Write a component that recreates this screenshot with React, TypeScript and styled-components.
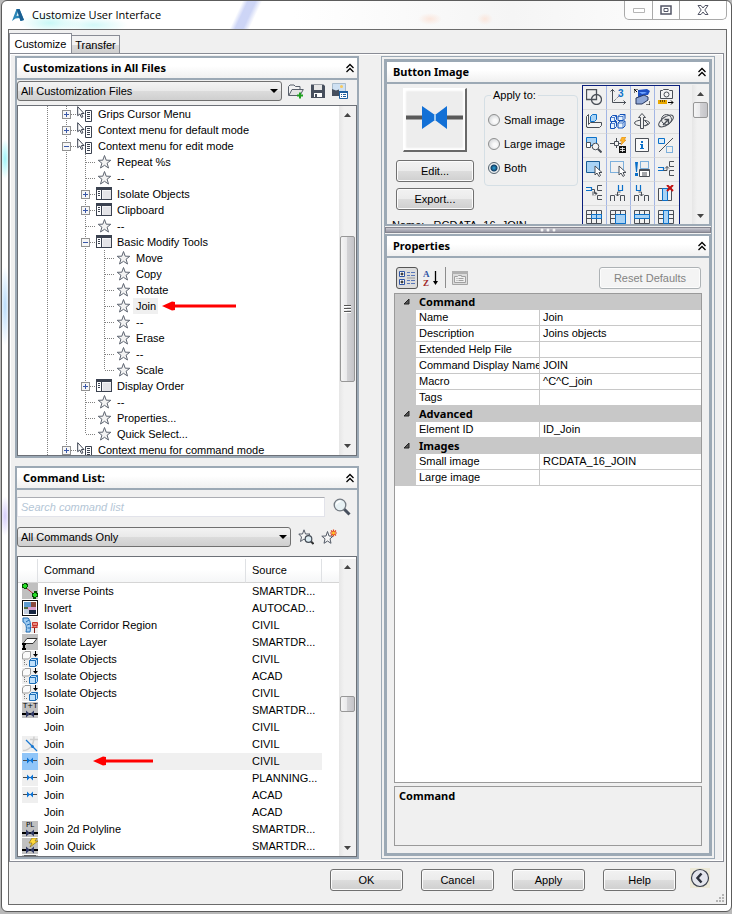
import React from 'react';
import styled, { createGlobalStyle, css } from 'styled-components';

const GlobalStyle = createGlobalStyle`
  * { box-sizing: border-box; }
  html, body { margin: 0; padding: 0; }
  body {
    background: #b9b9b9;
    color: #000;
    font: 11px/16px "Liberation Sans", Arial, sans-serif;
    overflow: hidden;
  }
  button, input, select { font: inherit; color: inherit; margin: 0; }
`;

const headingFont = css`
  font: bold 11px/16px "Noto Sans", "Open Sans", sans-serif;
`;

const edge = '#9ca9b5';

/* ---------- window ---------- */

const Desktop = styled.div`
  height: 100vh;
  min-height: 640px;
  padding: 0 0 2px 1px;
  display: flex;
`;

const Dialog = styled.main`
  flex: 1;
  min-width: 0;
  display: flex;
  flex-direction: column;
  border: 1px solid #5c5c5c;
  border-radius: 6px;
  padding: 0 4px 6px 6px;
  background:
    linear-gradient(115deg, transparent 218px, #b4c0f1aa 223px, #b4c0f1aa 230px, transparent 236px) 0 0 / 560px 28px no-repeat,
    radial-gradient(ellipse 30px 10px at 48px 22px, #c9f8f6, transparent) no-repeat,
    radial-gradient(ellipse 34px 8px at 92px 24px, #d3f8f8, transparent) no-repeat,
    radial-gradient(ellipse 12px 6px at 428px 18px, #fbe6dc, transparent) no-repeat,
    radial-gradient(ellipse 8px 6px at 483px 18px, #fbe6dc, transparent) no-repeat,
    radial-gradient(ellipse 5px 20px at 3px 158px, #9ff4f8, transparent) no-repeat,
    radial-gradient(ellipse 5px 40px at 3px 305px, #b9dcfb, transparent) no-repeat,
    radial-gradient(ellipse 5px 20px at 3px 515px, #d5cdfb, transparent) no-repeat,
    linear-gradient(90deg, #fff 40%, #f5f5f5 70%, #fff);
`;

const TitleBar = styled.header`
  height: 28px;
  flex: none;
  display: flex;
  align-items: flex-start;
  gap: 6px;
  padding-left: 2px;
`;

const TitleIcon = styled.span`
  display: flex;
  padding-top: 6px;
`;

const Title = styled.h1`
  flex: 1;
  margin: 0;
  padding-top: 5px;
  font: 11px/18px "Open Sans", "Noto Sans", sans-serif;
`;

const Captions = styled.div`
  display: flex;
  height: 19px;
  border: 1px solid #a9a9a9;
  border-top: 0;
  border-radius: 0 0 5px 5px;
  background: #ffffff99;
`;

const Caption = styled.button<{ $wide?: boolean }>`
  width: ${p => (p.$wide ? 47 : 27)}px;
  padding: 0;
  border: 0;
  background: none;
  display: flex;
  align-items: center;
  justify-content: center;
  & + & { border-left: 1px solid #a9a9a9; }
`;

const Client = styled.div`
  flex: 1;
  min-height: 0;
  display: flex;
  flex-direction: column;
  border: 1px solid #6b6b6b;
  background: #f0f0f0;
`;

const TabStrip = styled.div`
  display: flex;
  align-items: flex-end;
  height: 23px;
  flex: none;
`;

const Tab = styled.button<{ $active?: boolean }>`
  height: ${p => (p.$active ? 20 : 18)}px;
  width: ${p => (p.$active ? 63 : 48)}px;
  padding: 0;
  text-align: center;
  border: 1px solid #898c95;
  border-bottom: 0;
  background: ${p => (p.$active ? '#fff' : 'linear-gradient(#f2f2f2 50%, #dadada 50%, #cfcfcf)')};
  & + & { border-left: 0; }
`;

const TabPage = styled.section`
  flex: 1;
  min-height: 0;
  display: grid;
  grid-template-columns: 344fr 334fr;
  column-gap: 22px;
  margin-right: 2px;
  padding: 2px 8px 2px 5px;
  border: 1px solid #898c95;
  box-shadow: inset 0 0 0 1px #fff;
`;

const LeftColumn = styled.div`
  min-width: 0;
  min-height: 0;
  display: grid;
  grid-template-rows: 401fr 393fr;
  row-gap: 8px;
`;

const RightColumn = styled.div`
  min-width: 0;
  min-height: 0;
  display: flex;
  flex-direction: column;
  border: 4px double ${edge};
`;

/* ---------- panels ---------- */

const Panel = styled.section<{ $grow?: boolean }>`
  min-height: 0;
  min-width: 0;
  display: flex;
  flex-direction: column;
  border: 2px solid ${edge};
  ${p => p.$grow && css`flex: 1;`}
`;

const PanelHeader = styled.div`
  height: 22px;
  flex: none;
  display: flex;
  align-items: center;
  padding: 0 2px 0 6px;
  background: linear-gradient(#fff 40%, #f0f0f0);
  border-bottom: 2px solid ${edge};
`;

const PanelTitle = styled.h2`
  ${headingFont}
  flex: 1;
  margin: 0;
`;

const IconButton = styled.button`
  display: flex;
  flex: none;
  padding: 0;
  border: 0;
  background: none;
`;

const ToolRow = styled.div<{ $kind: 'files' | 'search' | 'filter' }>`
  flex: none;
  display: flex;
  align-items: center;
  ${p => p.$kind === 'files' && css`height: 25px; gap: 6px; padding: 0 8px 4px 0;`}
  ${p => p.$kind === 'search' && css`height: 33px; gap: 8px; padding: 2px 6px 0 0;`}
  ${p => p.$kind === 'filter' && css`height: 33px; gap: 7px; padding: 0 20px 4px 0;`}
`;

const SelectWrap = styled.label`
  flex: 1;
  min-width: 0;
  display: grid;
  align-items: center;
  & > * { grid-area: 1 / 1; }
  & > svg { justify-self: end; margin-right: 4px; pointer-events: none; }
`;

const Select = styled.select`
  appearance: none;
  width: 100%;
  height: 20px;
  padding: 0 20px 0 3px;
  border: 1px solid #707070;
  border-radius: 3px;
  background: linear-gradient(#f3f3f3, #e9e9e9 50%, #dcdcdc 50%, #cfcfcf);
`;

const SearchInput = styled.input`
  flex: 1;
  min-width: 0;
  height: 20px;
  padding: 0 3px;
  border: 1px solid #e2e3ea;
  border-top-color: #abadb3;
  background: #fff;
  font-style: italic;
  &::placeholder { color: #b4c6d6; opacity: 1; }
`;

/* ---------- scroll bars ---------- */

const ScrollTrack = styled.div`
  width: 17px;
  flex: none;
  display: flex;
  flex-direction: column;
  background: linear-gradient(90deg, #e6e6e6, #f1f1f1 30%, #f1f1f1);
`;

const ScrollArrow = styled.button`
  height: 17px;
  flex: none;
  padding: 0;
  border: 0;
  background: none;
  display: flex;
  align-items: center;
  justify-content: center;
`;

const ScrollGap = styled.div<{ $grow: number }>`
  flex: ${p => p.$grow} 1 0;
`;

const ScrollThumb = styled.div<{ $grow?: number }>`
  flex: ${p => (p.$grow ? `${p.$grow} 1 0` : '0 0 16px')};
  margin: 0 1px;
  border: 1px solid #979797;
  border-radius: 2px;
  background: linear-gradient(90deg, #f5f5f5, #e9e9eb 45%, #d2d2d5 50%, #c4c4c8);
  display: flex;
  align-items: center;
  justify-content: center;
`;

function ScrollBar({ before, thumb, after }: { before: number; thumb?: number; after: number }) {
  return (
    <ScrollTrack>
      <ScrollArrow aria-label="Scroll up">
        <svg width="7" height="4"><path d="M3.5 0L7 4H0z" fill="#444" /></svg>
      </ScrollArrow>
      <ScrollGap $grow={before} />
      <ScrollThumb $grow={thumb}>
        {thumb && (
          <svg width="7" height="8" shapeRendering="crispEdges">
            <path d="M0 .5h7M0 3.5h7M0 6.5h7" stroke="#555" />
            <path d="M0 1.5h7M0 4.5h7M0 7.5h7" stroke="#fff" />
          </svg>
        )}
      </ScrollThumb>
      <ScrollGap $grow={after} />
      <ScrollArrow aria-label="Scroll down">
        <svg width="7" height="4"><path d="M0 0h7L3.500 4z" fill="#444" /></svg>
      </ScrollArrow>
    </ScrollTrack>
  );
}

/* ---------- small drawings ---------- */

const Svg = ({ children, w = 16, h = 16, crisp }: { children: React.ReactNode; w?: number; h?: number; crisp?: boolean }) => (
  <svg width={w} height={h} viewBox={`0 0 ${w} ${h}`} fill="none" shapeRendering={crisp ? 'crispEdges' : undefined}>
    {children}
  </svg>
);

const CollapseIcon = () => (
  <Svg w={10} h={10}>
    <path d="M1.500 5L5 1.500L8.500 5M1.500 9L5 5.500L8.500 9" stroke="#000" strokeWidth="1.300" />
  </Svg>
);

const DropArrow = () => <Svg w={8} h={4}><path d="M0 0h8L4 4z" fill="#000" /></Svg>;

const starPath = 'M8.500 1.500L10.200 6.200L14.800 6.300L11.100 9.200L12.500 14L8.500 11.300L4.500 14L5.900 9.200L2.200 6.300L6.800 6.200z';

const StarIcon = () => (
  <Svg><path d={starPath} fill="#f3f3f3" stroke="#5f6672" /></Svg>
);

const MenuIcon = () => (
  <Svg crisp>
    <path d="M.5 1.500h15v12H.5z" fill="#f4f4f6" stroke="#3b4250" />
    <path d="M1 1h14v3H1zM5 4h1v10H5z" fill="#3b4250" />
    <path d="M1 4h4v9H1z" fill="#fff" />
    <path d="M2 5.500h2M2 7.500h2M2 9.500h2" stroke="#3b4250" />
    <path d="M7 5h8v8H7z" fill="#e4e4e8" />
  </Svg>
);

const ContextIcon = () => (
  <Svg>
    <path d="M.7 .7V9.700L2.800 8L4.500 11.500L5.900 10.800L4.400 7.500H7z" fill="#fff" stroke="#3b4250" />
    <path d="M8.500 4.500h6v11h-6z" fill="#fff" stroke="#3b4250" />
    <path d="M10 6.500h3M10 8.500h3M10 10.500h3M10 12.500h3" stroke="#3b4250" />
  </Svg>
);

type Cell = 'v' | 'tee' | 'last' | 'plus' | 'minus';

const GuideCell = ({ kind }: { kind: Cell }) => {
  const box = kind === 'plus' || kind === 'minus';
  return (
    <Svg w={19} crisp>
      <path d={kind === 'last' ? 'M9.500 0V8' : 'M9.500 0V16'} stroke="#808080" strokeDasharray="1 1" />
      {kind !== 'v' && <path d="M10 8.500H19" stroke="#808080" strokeDasharray="1 1" />}
      {box && (
        <>
          <path d="M5.500 4.500h8v8h-8z" fill="#f6f6f6" stroke="#919191" />
          <path d={kind === 'plus' ? 'M7 8.500h5M9.500 6v5' : 'M7 8.500h5'} stroke="#3a58a8" />
        </>
      )}
    </Svg>
  );
};

const RedArrow = ({ length }: { length: number }) => (
  <Svg w={length} h={10}>
    <path d="M0 5L10 .5L13 1V9L10 9.500z" fill="#f00" />
    <path d={`M12 5H${length}`} stroke="#f00" strokeWidth="3" />
  </Svg>
);

/* ---------- customization tree ---------- */

const Well = styled.div`
  flex: 1;
  min-height: 0;
  display: flex;
  overflow: hidden;
  border: 1px solid #6d7178;
  background: #fff;
`;

const TreeList = styled.ul`
  flex: 1;
  min-width: 0;
  margin: 0;
  padding: 0 0 0 20px;
  list-style: none;
  overflow: hidden;
`;

const TreeRow = styled.li`
  height: 16px;
  display: flex;
  align-items: center;
  white-space: nowrap;
  & > svg { flex: none; }
`;

const TreeIcon = styled.span`
  display: flex;
  flex: none;
  margin-left: 1px;
`;

const TreeLabel = styled.span<{ $selected?: boolean }>`
  height: 16px;
  line-height: 16px;
  margin: 0 4px 0 2px;
  padding: 0 2px 0 3px;
  background: ${p => (p.$selected ? '#f0f0f0' : 'none')};
`;

type TreeNode = { label: string; cells: Cell[]; icon: 'star' | 'menu' | 'context'; selected?: boolean };

const tree: TreeNode[] = [
  { label: 'Grips Cursor Menu', cells: ['v', 'plus'], icon: 'context' },
  { label: 'Context menu for default mode', cells: ['v', 'plus'], icon: 'context' },
  { label: 'Context menu for edit mode', cells: ['v', 'minus'], icon: 'context' },
  { label: 'Repeat %s', cells: ['v', 'v', 'tee'], icon: 'star' },
  { label: '--', cells: ['v', 'v', 'tee'], icon: 'star' },
  { label: 'Isolate Objects', cells: ['v', 'v', 'plus'], icon: 'menu' },
  { label: 'Clipboard', cells: ['v', 'v', 'plus'], icon: 'menu' },
  { label: '--', cells: ['v', 'v', 'tee'], icon: 'star' },
  { label: 'Basic Modify Tools', cells: ['v', 'v', 'minus'], icon: 'menu' },
  { label: 'Move', cells: ['v', 'v', 'v', 'tee'], icon: 'star' },
  { label: 'Copy', cells: ['v', 'v', 'v', 'tee'], icon: 'star' },
  { label: 'Rotate', cells: ['v', 'v', 'v', 'tee'], icon: 'star' },
  { label: 'Join', cells: ['v', 'v', 'v', 'tee'], icon: 'star', selected: true },
  { label: '--', cells: ['v', 'v', 'v', 'tee'], icon: 'star' },
  { label: 'Erase', cells: ['v', 'v', 'v', 'tee'], icon: 'star' },
  { label: '--', cells: ['v', 'v', 'v', 'tee'], icon: 'star' },
  { label: 'Scale', cells: ['v', 'v', 'v', 'last'], icon: 'star' },
  { label: 'Display Order', cells: ['v', 'v', 'plus'], icon: 'menu' },
  { label: '--', cells: ['v', 'v', 'tee'], icon: 'star' },
  { label: 'Properties...', cells: ['v', 'v', 'tee'], icon: 'star' },
  { label: 'Quick Select...', cells: ['v', 'v', 'last'], icon: 'star' },
  { label: 'Context menu for command mode', cells: ['v', 'plus'], icon: 'context' },
];

const treeIcons = { star: StarIcon, menu: MenuIcon, context: ContextIcon };

const OpenIcon = () => (
  <Svg>
    <path d="M.5 12.500V3.500L2 2h4l1.500 1.500H12V6" stroke="#59606b" fill="#f3f3f3" />
    <path d="M.8 12.500L4 6.500H15.300L12 12.500z" stroke="#59606b" fill="#e4e4e4" />
    <path d="M9 12.500h6M12 9.500v6" stroke="#20a020" strokeWidth="2" />
  </Svg>
);

const SaveIcon = () => (
  <Svg>
    <path d="M1 1.500h12.500L15 3v12H1z" fill="#474f5d" />
    <path d="M4 2h8v5H4z" fill="#e6e6e6" />
    <path d="M4 10h8v4H4z" fill="#fff" />
    <path d="M5 11h2v3H5z" fill="#474f5d" />
  </Svg>
);

const WorkspaceIcon = () => (
  <Svg w={17}>
    <path d="M.5 .5h13v12H.5z" fill="#cfe1f3" stroke="#a9bccd" />
    <path d="M0 6l4 1.500 3-1v6.500H0z" fill="#474f5d" />
    <circle cx="9.500" cy="3.500" r="1.500" fill="#f7c95c" />
    <path d="M7.500 8.500h8v7h-8z" fill="#fff" stroke="#1e5f9e" />
    <path d="M7 8h9v2H7z" fill="#1e5f9e" />
    <path d="M9 11.500h1m1 0h3M9 13.500h1m1 0h3" stroke="#1e5f9e" />
  </Svg>
);

/* ---------- command list ---------- */

const SearchIcon = () => (
  <Svg w={18} h={18}>
    <path d="M11 11l5.500 5.500" stroke="#474f5d" strokeWidth="3" />
    <circle cx="7" cy="7" r="5.800" fill="#e7f1f4" stroke="#737a82" strokeWidth="1.300" />
    <path d="M3.500 6.500a3.500 3.500 0 0 1 4-3" stroke="#fff" strokeWidth="1.500" />
  </Svg>
);

const FindStarIcon = () => (
  <Svg>
    <path d="M6 .8L7.500 5H12L8.500 8L9.500 12.500L6 10L2.500 12.500L3.500 8L.8 5H4.500z" fill="#f5f5f5" stroke="#555c68" />
    <path d="M13 12.500l2.500 2.500" stroke="#333" strokeWidth="2" />
    <circle cx="10.500" cy="10" r="3.300" fill="#dcecf2" stroke="#444b55" strokeWidth="1.200" />
  </Svg>
);

const NewStarIcon = () => (
  <Svg>
    <path d="M6.500 2.500L8 7L12 7.200L9 9.800L10 14.300L6.500 12L3 14.300L4 9.800L.8 7.200L5 7z" fill="#f5f5f5" stroke="#555c68" />
    <path d="M12.500 .5v7M9 4h7M10 1.500l5 5M15 1.500l-5 5" stroke="#e2451b" strokeWidth="1.200" />
    <circle cx="12.500" cy="4" r="1.500" fill="#ffc72c" />
  </Svg>
);

const CommandWell = styled(Well)`
  padding-top: 2px;
`;

const CommandArea = styled.div`
  flex: 1;
  min-width: 0;
  overflow: hidden;
`;

const CommandTable = styled.table`
  width: 100%;
  table-layout: fixed;
  border-collapse: separate;
  border-spacing: 0;
  th, td {
    padding: 0 0 0 6px;
    text-align: left;
    font-weight: normal;
    white-space: nowrap;
    overflow: hidden;
  }
  th {
    height: 24px;
    border-bottom: 1px solid #d5d5d5;
    border-right: 1px solid #dfe1e4;
    background: linear-gradient(#fff 45%, #f5f6f7);
  }
  td { height: 17px; line-height: 17px; }
  th:first-child, td:first-child { padding: 0 0 0 4px; }
  th:last-child { border-right: 0; }
  td svg { display: block; }
`;

const Col = styled.col<{ $w?: number }>`
  width: ${p => (p.$w ? `${p.$w}px` : 'auto')};
`;

const CommandRow = styled.tr<{ $selected?: boolean }>`
  ${p => p.$selected && css`
    td:not(:first-child):not(:last-child) { background: #f0f0f0; }
  `}
`;

const NameCell = styled.div`
  display: flex;
  align-items: center;
  height: 17px;
  gap: 29px;
`;

const Plate = ({ fill = '#c0c0c0' }: { fill?: string }) => <path d="M0 0h16v16H0z" fill={fill} />;

const DarkJoin = () => (
  <>
    <path d="M0 12h16" stroke="#000" strokeWidth="2" />
    <path d="M4 8.500l4 3.500L4 15.500zM12 8.500L8 12L12 15.500z" fill="#333c66" />
  </>
);

const tinyLabel = { font: '7px "DejaVu Sans", sans-serif' };

const BlueJoin = () => (
  <>
    <path d="M1 7.500h14" stroke="#4b4b4b" />
    <path d="M5 4.500L8 7.500L5 10.500zM11 4.500L8 7.500L11 10.500z" fill="#0a74d8" />
  </>
);

const Isolate = () => (
  <Svg>
    <Plate fill="#efefef" />
    <path d="M.5 3L3 .5h5.500v5.500L6.500 8H.5z" fill="#fafafa" stroke="#9c9c9c" />
    <path d="M7.500 9.500l2-2h6v6l-2 2h-6z" fill="#bfe0fb" stroke="#1e6fb8" />
    <path d="M7.500 9.500h6v6m0-6l2-2" stroke="#1e6fb8" />
    <path d="M11 3h5l-2.500 3z" fill="#000" /><path d="M13.500 0v4" stroke="#000" />
    <path d="M2.500 9v4.500H6" stroke="#777" strokeDasharray="1 1" />
  </Svg>
);

const commandIcons: Record<string, React.ReactNode> = {
  inverse: (
    <Svg>
      <Plate />
      <path d="M3 4l10 8" stroke="#b02a3c" />
      <path d="M2 0h3v1h1v3H5v2H2V5H0V1h2zM12 8h3v2h1v4h-2v2h-3v-2h-1v-4h2z" fill="#074d07" />
      <path d="M2 1h2v4H2zM1 2h4v2H1zM12 10h2v4h-2zM11 11h4v2h-4z" fill="#25dc25" />
    </Svg>
  ),
  invert: (
    <Svg crisp>
      <path d="M.5 .5h15v15H.5z" fill="#fff" stroke="#111" />
      <path d="M2 2h7v6H2z" fill="#5f9bd0" /><path d="M9 2h5v5H9z" fill="#8a4a3d" />
      <path d="M2 8h5v6H2z" fill="#c3cfe0" /><path d="M7 9h7v5H7z" fill="#15243f" />
      <path d="M6 7h8v3H6z" fill="#d9a3cf" /><path d="M2 7h4v2H2z" fill="#51693f" />
    </Svg>
  ),
  corridor: (
    <Svg>
      <Plate fill="#efefef" />
      <path d="M1 1h5c3 3 3 9 2 14H4C5 10 4 6 1 5z" fill="#9fccf2" stroke="#1f6cb5" />
      <path d="M4 5l3-2M5 8l3-1M5.500 11l3 0" stroke="#1f6cb5" />
      <path d="M10.500 5.500h5v3h-5zM9.500 10.500h6M11 8.500h4v2h-4z" stroke="#c6352c" fill="#e98a80" />
      <path d="M12.500 11v5" stroke="#7a1b16" />
    </Svg>
  ),
  layer: (
    <Svg>
      <Plate />
      <path d="M1 9.500L5 4.500H15L11 9.500z" fill="#fff" stroke="#333" />
      <path d="M2 9v6M0 10h4M0 15h4" stroke="#000" strokeWidth="2" />
    </Svg>
  ),
  isolate: <Isolate />,
  textJoin: <Svg><Plate /><text x="1" y="6" fill="#000" style={tinyLabel}>T+T</text><DarkJoin /></Svg>,
  polyJoin: <Svg><Plate /><text x="4" y="6" fill="#000" style={tinyLabel}>PL</text><DarkJoin /></Svg>,
  quickJoin: (
    <Svg><Plate /><DarkJoin /><path d="M10 0h5l-2 3h3L8 9l2-4H7z" fill="#ffd83a" stroke="#7c6200" strokeWidth=".6" /></Svg>
  ),
  diagonal: (
    <Svg>
      <Plate fill="#efefef" />
      <path d="M1 14.500c6 0 11-5 11-14M8 3.500h8" stroke="#cfcfcf" strokeWidth="1.500" />
      <path d="M4 4l11 11" stroke="#1a78d2" strokeWidth="1.200" /><circle cx="10.500" cy="10.500" r="1.500" fill="#1a78d2" />
    </Svg>
  ),
  join: <Svg><Plate fill="#efefef" /><BlueJoin /></Svg>,
  joinSelected: <Svg h={17}><path d="M0 0h16v17H0z" fill="#90c5f8" /><BlueJoin /></Svg>,
  partial: <Svg><Plate /><path d="M2 1.500h12" stroke="#000" strokeWidth="2" /></Svg>,
};

type Command = { name: string; source: string; icon?: string; selected?: boolean };

const commands: Command[] = [
  { name: 'Inverse Points', source: 'SMARTDR...', icon: 'inverse' },
  { name: 'Invert', source: 'AUTOCAD...', icon: 'invert' },
  { name: 'Isolate Corridor Region', source: 'CIVIL', icon: 'corridor' },
  { name: 'Isolate Layer', source: 'SMARTDR...', icon: 'layer' },
  { name: 'Isolate Objects', source: 'CIVIL', icon: 'isolate' },
  { name: 'Isolate Objects', source: 'ACAD', icon: 'isolate' },
  { name: 'Isolate Objects', source: 'CIVIL', icon: 'isolate' },
  { name: 'Join', source: 'SMARTDR...', icon: 'textJoin' },
  { name: 'Join', source: 'CIVIL' },
  { name: 'Join', source: 'CIVIL', icon: 'diagonal' },
  { name: 'Join', source: 'CIVIL', icon: 'joinSelected', selected: true },
  { name: 'Join', source: 'PLANNING...', icon: 'join' },
  { name: 'Join', source: 'ACAD', icon: 'join' },
  { name: 'Join', source: 'ACAD' },
  { name: 'Join 2d Polyline', source: 'SMARTDR...', icon: 'polyJoin' },
  { name: 'Join Quick', source: 'SMARTDR...', icon: 'quickJoin' },
  { name: '', source: '', icon: 'partial' },
];

/* ---------- button image ---------- */

const ImageBody = styled.div`
  height: 140px;
  flex: none;
  display: flex;
  overflow: hidden;
`;

const PreviewColumn = styled.div`
  width: 87px;
  flex: none;
  display: flex;
  flex-direction: column;
  align-items: center;
  gap: 6px;
  padding: 4px 0 0 9px;
`;

const Preview = styled.div`
  width: 64px;
  height: 64px;
  margin-bottom: 2px;
  border: 1px solid #fff;
  border-width: 1px 2px 2px 1px;
  border-right-color: #696969;
  border-bottom-color: #696969;
  background: #ededed;
  box-shadow: inset 0 0 2px 2px #fff;
`;

const PushButton = styled.button<{ $w: number }>`
  width: ${p => p.$w}px;
  height: 22px;
  flex: none;
  padding: 0;
  border: 1px solid #707070;
  border-radius: 3px;
  box-shadow: inset 0 0 0 1px #fcfcfc;
  background: linear-gradient(#f2f2f2, #ebebeb 50%, #dddddd 50%, #cfcfcf);
  &:disabled {
    color: #838383;
    border-color: #adb2b5;
    background: #f4f4f4;
  }
`;

const ImageName = styled.div`
  align-self: flex-start;
  height: 16px;
  margin: 1px 0 0 -4px;
  white-space: pre;
  flex: none;
`;

const ApplyGroup = styled.fieldset`
  width: 94px;
  height: 99px;
  flex: none;
  margin: 3px 0 0 10px;
  padding: 9px 0 0 3px;
  border: 1px solid #d5dfe5;
  border-radius: 4px;
  display: flex;
  flex-direction: column;
  gap: 8px;
  legend { margin-left: 3px; padding: 0 2px; }
`;

const RadioLabel = styled.label`
  display: flex;
  align-items: center;
  gap: 4px;
  height: 16px;
`;

const Radio = styled.input`
  appearance: none;
  width: 12px;
  height: 12px;
  border: 1px solid #8e8f8f;
  border-radius: 50%;
  background: radial-gradient(circle at 60% 60%, #fafafa 20%, #c8cbce);
  &:checked {
    border-color: #56646f;
    background: radial-gradient(circle, #2aa5dc 0, #123f66 3px, #f4f4f4 4px, #dfe6ea 5px);
  }
`;

const PaletteArea = styled.div`
  flex: 1;
  min-width: 0;
  display: flex;
  padding: 1px 0 0 4px;
  justify-content: space-between;
`;

const Palette = styled.div`
  width: 98px;
  flex: none;
  align-self: flex-start;
  display: grid;
  grid-template-columns: repeat(4, 24px);
  border: 1px solid #0a1f7c;
  border-bottom: 0;
`;

const PaletteButton = styled.button`
  height: 24px;
  padding: 3px 3px 4px;
  border: 0;
  border-right: 1px solid #a3b6e4;
  border-bottom: 1px solid #dcdcdc;
  background: none;
  display: flex;
  &:nth-child(4n) { border-right: 0; }
`;

const K = '#4a4f57';
const B = '#0b70c9';
const L = '#a9d3f5';

const paletteIcons: [string, React.ReactNode][] = [
  ['Region', <><path d="M.5 .5h10v10H.5z" stroke={K} strokeWidth="1.300" /><circle cx="10.500" cy="10.500" r="5" stroke={K} strokeWidth="1.300" /></>],
  ['3D axes', <><path d="M2.500 0v13.500H16M.5 2.500l2-2 2 2M13.500 11.500l2 2-2 2" stroke={K} /><path d="M4 12l5-5" stroke={K} strokeDasharray="1 1" /><text x="8" y="8" fill={B} style={{ font: 'bold 10px "Liberation Sans", Arial, sans-serif' }}>3</text></>],
  ['3D move', <><path d="M4 1l9-1 3 2-2 4H9l4 2-3 2H4V7z" fill="#1c4fc4" /><path d="M2 9l8-3 4 2v3l-6 4H2z" fill="#8fa7d6" stroke="#26355d" /><path d="M5 3h6l2 1-5 1z" fill="#6ea3ff" /><path d="M0 4V0h4M0 0l3 3M16 12v4h-4" stroke="#000" /></>],
  ['Camera', <><path d="M2.500 1.500h2l1-1h5l1 1h3v8h-12z" stroke={K} fill="#f4f4f4" /><circle cx="8.500" cy="5.500" r="2.500" stroke={K} /><path d="M0 11h9v4H0z" fill="#e9a800" /><path d="M2.500 11v2m2-2v2m2-2v2" stroke="#6b4c00" /><path d="M10 13.500h5m-2-2l2 2-2 2" stroke="#000" /></>],
  ['3D align', <><path d="M.5 3.500l2-2V14H.5z" fill="#fff" stroke={K} /><path d="M4.500 3.500l2-2h4v5l-2 2h-4z" fill={L} stroke={B} /><path d="M2.500 11.500l2-2h11v3l-2 2H1" fill="#f4f4f4" stroke={K} /></>],
  ['3D array', <><path d="M.5 4.500l2-2h4v4l-2 2h-4zM8 3.500l2-2h5v4l-2 2H8zM.5 10.500l2-2h4v5l-2 2h-4zM8 10l2-2h5v5l-2 2H8z" fill="#e6f2fd" stroke="#1150b8" /><path d="M.5 4.500h4v4m0-4l2-2M8 3.500h5v4m0-4l2-2M.5 10.500h4v5m0-5l2-2M8 10h5v5m0-5l2-2" stroke="#1150b8" strokeWidth=".7" /></>],
  ['3D rotate', <><ellipse cx="8" cy="10" rx="7.500" ry="2.800" stroke={K} /><path d="M6.500 15.500v-11h-2L8 .5l3.500 4h-2v11z" fill="#efefef" stroke={K} /><path d="M11 8l3 3-3 2" stroke={K} /></>],
  ['3D orbit', <><circle cx="8.500" cy="6.500" r="5" stroke={K} /><ellipse cx="8" cy="8" rx="8.500" ry="4" transform="rotate(-35 8 8)" stroke={K} /><path d="M5 12l5-5M6.500 6.500h4v4" stroke={K} strokeWidth="1.400" /></>],
  ['Zoom object', <><path d="M.5 .5h10v8H.5z" fill={L} stroke={B} /><path d="M.5 5.500h4v5h-4z" fill="#fff" stroke={K} /><circle cx="9.500" cy="9.500" r="3.300" fill="#f4f4f4" stroke={K} /><path d="M12 12l3.500 3.500" stroke={K} strokeWidth="2" /></>],
  ['Quick point', <><path d="M0 6.500h11M6.500 1v10" stroke={K} /><path d="M4.500 4.500h4v4h-4z" stroke={K} fill="#f4f4f4" /><path d="M12 0h4l-2 3h2l-5 5 1-4h-2z" fill="#ffb52a" stroke="#d27800" strokeWidth=".5" /><path d="M9 9h7v7H9z" fill="#111" /><path d="M10 11.500h5m-5 2h5M12.500 10v5" stroke="#fff" strokeWidth=".8" /></>],
  ['Information', <><path d="M1.500 1.500h13v13h-13z" fill="#fafafa" stroke={K} /><path d="M7 4h2v2H7zM6 7h3v4h1v1H6v-1h1V8H6z" fill={B} /></>],
  ['Isolate', <><path d="M.5 1.500h6v5h-6z" fill="#d9ecfb" stroke={B} /><path d="M1 15L15 1" stroke={K} /><path d="M8.500 9.500h6v6h-6z" stroke={B} strokeDasharray="1 1" /></>],
  ['Select', <><path d="M.5 .5h13v11H.5z" fill={L} stroke="#1a5d96" /><path d="M9 5v9l2-2 2 3.500 1.500-1L13 11.500h3z" fill="#fff" stroke={K} /></>],
  ['Select window', <><path d="M.5 .5h13v11H.5z" stroke={B} strokeDasharray="1 1" /><path d="M9 5v9l2-2 2 3.500 1.500-1L13 11.500h3z" fill="#fff" stroke={K} /></>],
  ['Select properties', <><path d="M1 1h3L3 11H2zM1 12h3v3H1z" fill={B} /><path d="M6.500 .5h8v7h-8z" stroke={B} strokeDasharray="1 1" /><path d="M5.500 8.500h10v7h-10z" fill="#fff" stroke={K} /><path d="M5 9.500h11M8 12h5m-5 2h5" stroke={K} /></>],
  ['Attach right', <><path d="M0 6.500h5.500v3H0" stroke={B} strokeWidth="1.200" /><path d="M5.500 9.500h3.500V5.500M7 7.500l2-2 2 2" stroke={K} /><path d="M16 .5h-4.500v5H16M16 9.500h-4.500v5H16" stroke={K} /></>],
  ['Attach left', <><path d="M0 2.500h5.500v3H0" stroke={B} strokeWidth="1.200" /><path d="M6 4.500h2.500v4h2.500M7 6.500v4M9 7l2 1.500L9 10.500" stroke={K} /><path d="M16 .5h-4.500v5H16M16 10.500h-4.500v4H16" stroke={K} /></>],
  ['Attach up', <><path d="M8.500 0v5.500h4V0" stroke={B} strokeWidth="1.200" /><path d="M10.500 7h-3v4M5.500 9l2 2 2-2" stroke={K} /><path d="M.5 16v-5.500h4V16M10.500 16v-5.500h4V16" stroke={K} /></>],
  ['Attach down', <><path d="M2.500 0v5.500h4V0" stroke={B} strokeWidth="1.200" /><path d="M4.500 7h3v4M5.500 9l2 2 2-2" stroke={K} /><path d="M.5 16v-5.500h4V16M10.500 16v-5.500h4V16" stroke={K} /></>],
  ['Delete column', <><path d="M.5 3.500h13v12H.5z" fill="#f4f4f4" stroke={K} /><path d="M4.500 3.500h5v12h-5z" fill={L} stroke={B} /><path d="M9 0l6 6m0-6L9 6" stroke="#c01010" strokeWidth="2" /></>],
  ['Edit cells', <><path d="M.5 1.500h15v13H.5zM.5 5.500h15M.5 9.500h15M5.500 1v13M10.500 1v13" stroke={K} /><path d="M5.500 5.500h10v4h-10zM10.500 5.500v4" fill={L} stroke={B} /></>],
  ['Merge cells', <><path d="M.5 1.500h15v13H.5zM.5 5.500h15M.5 9.500h15M5.500 1v13M10.500 1v13" stroke={K} /><path d="M5.500 5.500h10v9h-10z" fill={L} stroke={B} /></>],
  ['Merge rows', <><path d="M.5 1.500h15v13H.5zM5.500 1v13M10.500 1v13" stroke={K} /><path d="M.5 5.500h15v4H.5z" fill={L} stroke={B} /></>],
  ['Merge columns', <><path d="M.5 1.500h15v13H.5zM.5 5.500h15M.5 9.500h15" stroke={K} /><path d="M5.500 1.500h5v13h-5z" fill={L} stroke={B} /></>],
];

const Splitter = styled.div`
  height: 6px;
  flex: none;
  margin: 1px 0;
  display: flex;
  align-items: center;
  justify-content: center;
  background: linear-gradient(#c8c8cf, #9696a3);
  border: 1px solid #85858f;
`;

/* ---------- properties ---------- */

const PropertiesBody = styled.div`
  flex: 1;
  min-height: 0;
  display: flex;
  flex-direction: column;
  padding: 9px 7px 7px;
`;

const PropertyTools = styled.div`
  height: 26px;
  flex: none;
  display: flex;
  align-items: flex-start;
  gap: 4px;
  padding: 0 1px 0 2px;
`;

const ToolButton = styled.button<{ $pressed?: boolean }>`
  width: ${p => (p.$pressed ? 22 : 18)}px;
  height: 22px;
  padding: 0;
  border: ${p => (p.$pressed ? '1px solid #555' : '0')};
  border-radius: 3px;
  background: ${p => (p.$pressed ? '#dcdcdc' : 'none')};
  display: flex;
  align-items: center;
  justify-content: center;
`;

const ToolRule = styled.span`
  width: 1px;
  height: 21px;
  margin: 0 1px;
  background: #8d8d8d;
`;

const ToolSpace = styled.span`
  flex: 1;
`;

const PropertyGrid = styled.div`
  flex: 1;
  min-height: 0;
  overflow: hidden;
  border: 1px solid #9a9a9a;
  background: #fff;
`;

const PropertyTable = styled.table`
  width: 100%;
  table-layout: fixed;
  border-collapse: separate;
  border-spacing: 0;
  th, td {
    height: 16px;
    padding: 0 0 0 3px;
    line-height: 15px;
    text-align: left;
    font-weight: normal;
    white-space: nowrap;
    overflow: hidden;
  }
  th { border-right: 1px solid #c8c8c8; }
  th, td { border-bottom: 1px solid #c8c8c8; }
`;

const Gutter = styled.td`
  && {
    padding: 0 0 0 8px;
    background: #c8c8c8;
  }
  svg { display: block; }
`;

const GroupHead = styled.th`
  && {
    ${headingFont}
    line-height: 15px;
    background: #c8c8c8;
  }
`;

const HelpBox = styled.div`
  ${headingFont}
  height: 60px;
  flex: none;
  margin-top: 3px;
  padding: 1px 4px;
  border: 1px solid #9a9a9a;
`;

const groups: { title: string; rows: [string, string][] }[] = [
  {
    title: 'Command',
    rows: [
      ['Name', 'Join'],
      ['Description', 'Joins objects'],
      ['Extended Help File', ''],
      ['Command Display Name', 'JOIN'],
      ['Macro', '^C^C_join'],
      ['Tags', ''],
    ],
  },
  { title: 'Advanced', rows: [['Element ID', 'ID_Join']] },
  { title: 'Images', rows: [['Small image', 'RCDATA_16_JOIN'], ['Large image', '']] },
];

/* ---------- footer ---------- */

const Footer = styled.footer`
  height: 42px;
  flex: none;
  display: flex;
  justify-content: flex-end;
  padding: 7px 2px 0 0;
`;

const FooterButtons = styled.div`
  display: flex;
  gap: 18px;
`;

const BackButton = styled(IconButton)`
  width: 20px;
  height: 20px;
  margin: -1px 0 0 14px;
  background: #ece9d8;
`;

const Grip = styled.span`
  align-self: flex-end;
  display: flex;
  margin: 0 0 2px 6px;
`;

function CollapsiblePanel({ title, grow, children }: { title: string; grow?: boolean; children: React.ReactNode }) {
  return (
    <Panel $grow={grow}>
      <PanelHeader>
        <PanelTitle>{title}</PanelTitle>
        <IconButton aria-label={`Collapse ${title}`}><CollapseIcon /></IconButton>
      </PanelHeader>
      {children}
    </Panel>
  );
}

function Combo({ label, value }: { label: string; value: string }) {
  return (
    <SelectWrap>
      <Select aria-label={label}><option>{value}</option></Select>
      <DropArrow />
    </SelectWrap>
  );
}

export default function App() {
  return (
    <Desktop>
      <GlobalStyle />
      <Dialog>
        <TitleBar>
          <TitleIcon>
            <Svg>
              <path d="M2 14L6.500 2h3L14 13l-3.500 1-1-3-4 .5z" fill="#2b87b8" />
              <path d="M8 4.500L6.500 9l3-.5z" fill="#e7f7fa" />
              <path d="M6.500 2h3L14 13l-3.500 1z" fill="#1b5f92" />
            </Svg>
          </TitleIcon>
          <Title>Customize User Interface</Title>
          <Captions>
            <Caption aria-label="Minimize"><Svg w={12} h={5}><path d="M.5 .5h11v4H.5z" fill="#fff" stroke="#b5b5b5" /></Svg></Caption>
            <Caption aria-label="Restore"><Svg w={12} h={10}><path d="M1 1h10v8H1z" fill="#fff" stroke="#535666" strokeWidth="1.500" /><path d="M4 3.500h4v3H4z" stroke="#535666" /></Svg></Caption>
            <Caption aria-label="Close" $wide><Svg w={12} h={10}><path d="M1 .5h3l2 2.500 2-2.500h3L7.800 5 11 9.500H8L6 7 4 9.500H1L4.200 5z" fill="#fff" stroke="#535666" /></Svg></Caption>
          </Captions>
        </TitleBar>
        <Client>
          <TabStrip role="tablist">
            <Tab role="tab" aria-selected $active>Customize</Tab>
            <Tab role="tab" aria-selected={false}>Transfer</Tab>
          </TabStrip>
          <TabPage>
            <LeftColumn>
              <CollapsiblePanel title="Customizations in All Files">
                <ToolRow $kind="files">
                  <Combo label="Customization files" value="All Customization Files" />
                  <IconButton aria-label="Load file"><OpenIcon /></IconButton>
                  <IconButton aria-label="Save"><SaveIcon /></IconButton>
                  <IconButton aria-label="Workspace image"><WorkspaceIcon /></IconButton>
                </ToolRow>
                <Well>
                  <TreeList>
                    {tree.map((node, i) => {
                      const Icon = treeIcons[node.icon];
                      return (
                        <TreeRow key={i}>
                          {node.cells.map((c, j) => <GuideCell key={j} kind={c} />)}
                          <TreeIcon><Icon /></TreeIcon>
                          <TreeLabel $selected={node.selected}>{node.label}</TreeLabel>
                          {node.selected && <RedArrow length={74} />}
                        </TreeRow>
                      );
                    })}
                  </TreeList>
                  <ScrollBar before={114} thumb={145} after={56} />
                </Well>
              </CollapsiblePanel>

              <CollapsiblePanel title="Command List:">
                <ToolRow $kind="search">
                  <SearchInput aria-label="Search command list" placeholder="Search command list" />
                  <IconButton aria-label="Search"><SearchIcon /></IconButton>
                </ToolRow>
                <ToolRow $kind="filter">
                  <Combo label="Command filter" value="All Commands Only" />
                  <IconButton aria-label="Find command"><FindStarIcon /></IconButton>
                  <IconButton aria-label="New command"><NewStarIcon /></IconButton>
                </ToolRow>
                <CommandWell>
                  <CommandArea>
                    <CommandTable>
                      <colgroup><Col $w={20} /><Col /><Col $w={76} /><Col $w={17} /></colgroup>
                      <thead>
                        <tr><th /><th scope="col">Command</th><th scope="col">Source</th><th /></tr>
                      </thead>
                      <tbody>
                        {commands.map((c, i) => (
                          <CommandRow key={i} $selected={c.selected}>
                            <td>{c.icon && commandIcons[c.icon]}</td>
                            <td><NameCell>{c.name}{c.selected && <RedArrow length={60} />}</NameCell></td>
                            <td>{c.source}</td>
                            <td />
                          </CommandRow>
                        ))}
                      </tbody>
                    </CommandTable>
                  </CommandArea>
                  <ScrollBar before={121} after={128} />
                </CommandWell>
              </CollapsiblePanel>
            </LeftColumn>

            <RightColumn>
              <CollapsiblePanel title="Button Image">
                <ImageBody>
                  <PreviewColumn>
                    <Preview>
                      <Svg w={61} h={61}>
                        <path d="M2 28.500h57" stroke="#595959" strokeWidth="4" />
                        <path d="M18 17l13 9 12-9v23l-12-9-13 9z" fill="#1270d6" />
                        <path d="M31 26v5" stroke="#9cc9f2" strokeWidth="2" />
                      </Svg>
                    </Preview>
                    <PushButton $w={78}>Edit...</PushButton>
                    <PushButton $w={78}>Export...</PushButton>
                    <ImageName>{'Name:   RCDATA_16_JOIN'}</ImageName>
                  </PreviewColumn>
                  <ApplyGroup>
                    <legend>Apply to:</legend>
                    <RadioLabel><Radio type="radio" name="apply" />Small image</RadioLabel>
                    <RadioLabel><Radio type="radio" name="apply" />Large image</RadioLabel>
                    <RadioLabel><Radio type="radio" name="apply" defaultChecked />Both</RadioLabel>
                  </ApplyGroup>
                  <PaletteArea>
                    <Palette>
                      {paletteIcons.map(([name, art]) => (
                        <PaletteButton key={name} aria-label={name}><Svg>{art}</Svg></PaletteButton>
                      ))}
                    </Palette>
                    <ScrollBar before={0} after={88} />
                  </PaletteArea>
                </ImageBody>
              </CollapsiblePanel>
              <Splitter>
                <Svg w={16} h={4}>
                  <circle cx="2" cy="2" r="1.500" fill="#f4f4f4" /><circle cx="8" cy="2" r="1.500" fill="#f4f4f4" /><circle cx="14" cy="2" r="1.500" fill="#f4f4f4" />
                </Svg>
              </Splitter>
              <CollapsiblePanel title="Properties" grow>
                <PropertiesBody>
                  <PropertyTools>
                    <ToolButton $pressed aria-label="Categorized">
                      <Svg w={18}>
                        <path d="M1.500 1.500h5v5h-5zM1.500 9.500h5v5h-5z" fill="#fff" stroke="#2f55a4" />
                        <path d="M2.500 4h3M4 2.500v3M2.500 12h3M4 10.500v3" stroke="#000" />
                        <path d="M9 2.500h3m1 0h4M9 5.500h3m1 0h4M9 10.500h3m1 0h4M9 13.500h3m1 0h4" stroke="#5b78b8" />
                        <path d="M9 8h8" stroke="#999" />
                      </Svg>
                    </ToolButton>
                    <ToolButton aria-label="Alphabetical">
                      <Svg h={18}>
                        <text x="0" y="8" fill="#2f55a4" style={{ font: 'bold 9px "Liberation Serif", serif' }}>A</text>
                        <text x="0" y="17" fill="#a02828" style={{ font: 'bold 9px "Liberation Serif", serif' }}>Z</text>
                        <path d="M12.500 2v12" stroke="#000" strokeWidth="1.300" /><path d="M10 12h5l-2.500 4z" fill="#000" />
                      </Svg>
                    </ToolButton>
                    <ToolRule />
                    <ToolButton aria-label="Property pages" disabled>
                      <Svg>
                        <path d="M.5 1.500h15v13H.5z" fill="#dcdcdc" stroke="#a4a4a4" /><path d="M0 1h16v3H0z" fill="#b0b0b0" />
                        <path d="M2.500 6.500h3l1-1h3v1h4v6h-11zM4.500 8.500h1m1 0h5M4.500 10.500h1m1 0h5" stroke="#a0a0a0" fill="#eee" />
                      </Svg>
                    </ToolButton>
                    <ToolSpace />
                    <PushButton $w={102} disabled>Reset Defaults</PushButton>
                  </PropertyTools>
                  <PropertyGrid>
                    <PropertyTable>
                      <colgroup><Col $w={21} /><Col $w={124} /><Col /></colgroup>
                      {groups.map(g => (
                        <tbody key={g.title}>
                          <tr>
                            <Gutter><Svg w={7} h={7}><path d="M6 1v5H1z" fill="#555" stroke="#222" /></Svg></Gutter>
                            <GroupHead colSpan={2} scope="rowgroup">{g.title}</GroupHead>
                          </tr>
                          {g.rows.map(([name, value]) => (
                            <tr key={name}><Gutter /><th scope="row">{name}</th><td>{value}</td></tr>
                          ))}
                        </tbody>
                      ))}
                    </PropertyTable>
                  </PropertyGrid>
                  <HelpBox>Command</HelpBox>
                </PropertiesBody>
              </CollapsiblePanel>
            </RightColumn>
          </TabPage>
          <Footer>
            <FooterButtons>
              <PushButton $w={73}>OK</PushButton>
              <PushButton $w={73}>Cancel</PushButton>
              <PushButton $w={73}>Apply</PushButton>
              <PushButton $w={73}>Help</PushButton>
            </FooterButtons>
            <BackButton aria-label="Hide pane">
              <Svg w={20} h={20}>
                <circle cx="10" cy="10" r="8.500" fill="#e3e5ec" stroke="#3a404c" strokeWidth="1.200" />
                <path d="M11.500 5.500L7.500 10l4 4.500" stroke="#2b303a" strokeWidth="2.500" />
              </Svg>
            </BackButton>
            <Grip>
              <Svg w={8} h={8} crisp><path d="M6 0h2v2H6zM3 3h2v2H3zM6 3h2v2H6zM0 6h2v2H0zM3 6h2v2H3zM6 6h2v2H6z" fill="#b5b5b5" /></Svg>
            </Grip>
          </Footer>
        </Client>
      </Dialog>
    </Desktop>
  );
}
